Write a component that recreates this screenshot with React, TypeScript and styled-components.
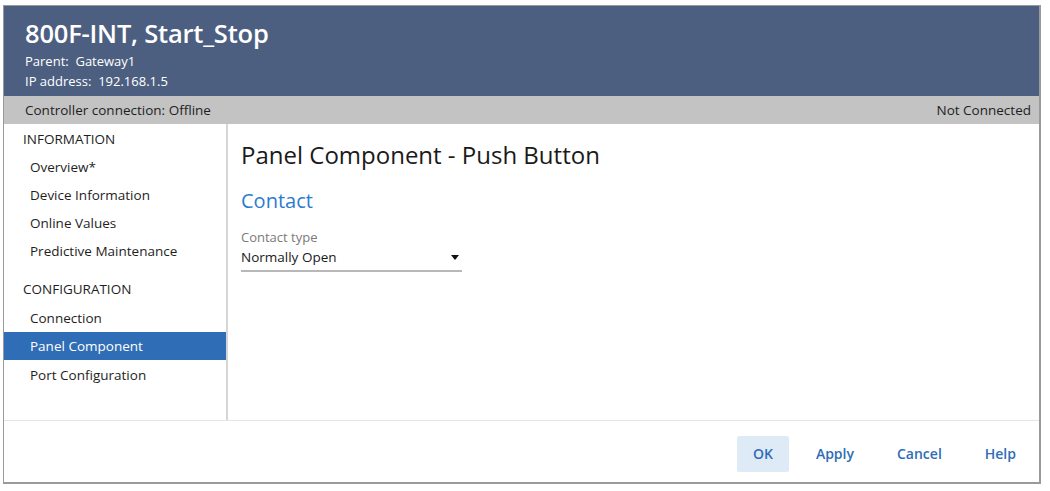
import React from "react";
import styled, { createGlobalStyle } from "styled-components";

const Global = createGlobalStyle`
  html, body { margin: 0; padding: 0; background: #ffffff; }
  body { font-family: "Open Sans", "Noto Sans", sans-serif; }
  * { box-sizing: border-box; }
`;

const Page = styled.div`
  width: 1050px;
  height: 491px;
  padding: 5px 9px 7px 3px;
`;

const Window = styled.div`
  width: 100%;
  height: 100%;
  border: 1px solid #9a9a9a;
  border-right-width: 2px;
  border-bottom-width: 2px;
  display: flex;
  flex-direction: column;
  background: #fff;
`;

const Header = styled.div`
  background: #4d5f80;
  color: #fff;
  height: 90px;
  padding: 9px 21px 0;
  display: flex;
  flex-direction: column;
`;

const Title = styled.div`
  font-size: 25.5px;
  font-weight: 600;
  line-height: 36px;
  letter-spacing: -0.2px;
`;

const Meta = styled.div`
  font-size: 13px;
  line-height: 20px;
  &:first-of-type { margin-top: 1px; }
`;

const StatusBar = styled.div`
  background: #c3c3c3;
  height: 28px;
  display: flex;
  align-items: center;
  justify-content: space-between;
  padding: 0 8px 0 21px;
  font-size: 13.5px;
  color: #1e1e1e;
`;

const Body = styled.div`
  flex: 1;
  display: flex;
  border-bottom: 1px solid #e4e4ea;
`;

const Sidebar = styled.div`
  width: 224px;
  border-right: 2px solid #d6d6d6;
  padding-top: 1px;
  display: flex;
  flex-direction: column;
`;

const Section = styled.div<{ $gap?: number }>`
  font-size: 13.5px;
  color: #1e1e1e;
  height: 28px;
  display: flex;
  align-items: center;
  padding-left: 19px;
  margin-top: ${(p) => p.$gap ?? 0}px;
`;

const NavItem = styled.div<{ $active?: boolean; $top?: number }>`
  font-size: 13.5px;
  height: 28px;
  display: flex;
  align-items: center;
  padding-left: 26px;
  margin-top: ${(p) => p.$top ?? 0}px;
  background: ${(p) => (p.$active ? "#2f6db6" : "transparent")};
  color: ${(p) => (p.$active ? "#fff" : "#1e1e1e")};
`;

const Content = styled.div`
  flex: 1;
  padding: 13px 13px;
`;

const PageTitle = styled.div`
  font-size: 24px;
  line-height: 36px;
  color: #1a1a1a;
`;

const SubTitle = styled.div`
  font-size: 20px;
  color: #2b7bd0;
  margin-top: 14px;
  line-height: 28px;
`;

const FieldLabel = styled.div`
  font-size: 13px;
  color: #7a7a7a;
  margin-top: 13px;
  line-height: 18px;
`;

const Select = styled.div`
  width: 221px;
  height: 26px;
  border-bottom: 2px solid #b8b8b8;
  display: flex;
  align-items: center;
  justify-content: space-between;
  padding: 0 3px 2px 0;
  font-size: 13.5px;
  color: #1a1a1a;
`;

const Footer = styled.div`
  height: 61px;
  display: flex;
  align-items: center;
  justify-content: flex-end;
  padding: 4px 9px 0 0;
`;

const Button = styled.div<{ $primary?: boolean }>`
  height: 36px;
  min-width: 52px;
  padding: 0 14px;
  margin-left: ${(p) => (p.$primary ? 0 : 15)}px;
  margin-right: ${(p) => (p.$primary ? -2 : 0)}px;
  display: flex;
  align-items: center;
  justify-content: center;
  font-size: 14px;
  font-weight: 600;
  color: #2f6db6;
  border-radius: 2px;
  background: ${(p) => (p.$primary ? "#deebf7" : "transparent")};
`;

export default function App() {
  return (
    <Page>
      <Global />
      <Window>
        <Header>
          <Title>800F-INT, Start_Stop</Title>
          <Meta>Parent:&nbsp; Gateway1</Meta>
          <Meta>IP address:&nbsp; 192.168.1.5</Meta>
        </Header>
        <StatusBar>
          <span>Controller connection: Offline</span>
          <span>Not Connected</span>
        </StatusBar>
        <Body>
          <Sidebar>
            <Section>INFORMATION</Section>
            <NavItem>Overview*</NavItem>
            <NavItem>Device Information</NavItem>
            <NavItem>Online Values</NavItem>
            <NavItem>Predictive Maintenance</NavItem>
            <Section $gap={10}>CONFIGURATION</Section>
            <NavItem $top={1}>Connection</NavItem>
            <NavItem $active>Panel Component</NavItem>
            <NavItem $top={1}>Port Configuration</NavItem>
          </Sidebar>
          <Content>
            <PageTitle>Panel Component - Push Button</PageTitle>
            <SubTitle>Contact</SubTitle>
            <FieldLabel>Contact type</FieldLabel>
            <Select>
              <span>Normally Open</span>
              <svg width="8" height="5" viewBox="0 0 8 5">
                <path d="M0 0 H8 L4 5 Z" fill="#111" />
              </svg>
            </Select>
          </Content>
        </Body>
        <Footer>
          <Button $primary>OK</Button>
          <Button>Apply</Button>
          <Button>Cancel</Button>
          <Button>Help</Button>
        </Footer>
      </Window>
    </Page>
  );
}
